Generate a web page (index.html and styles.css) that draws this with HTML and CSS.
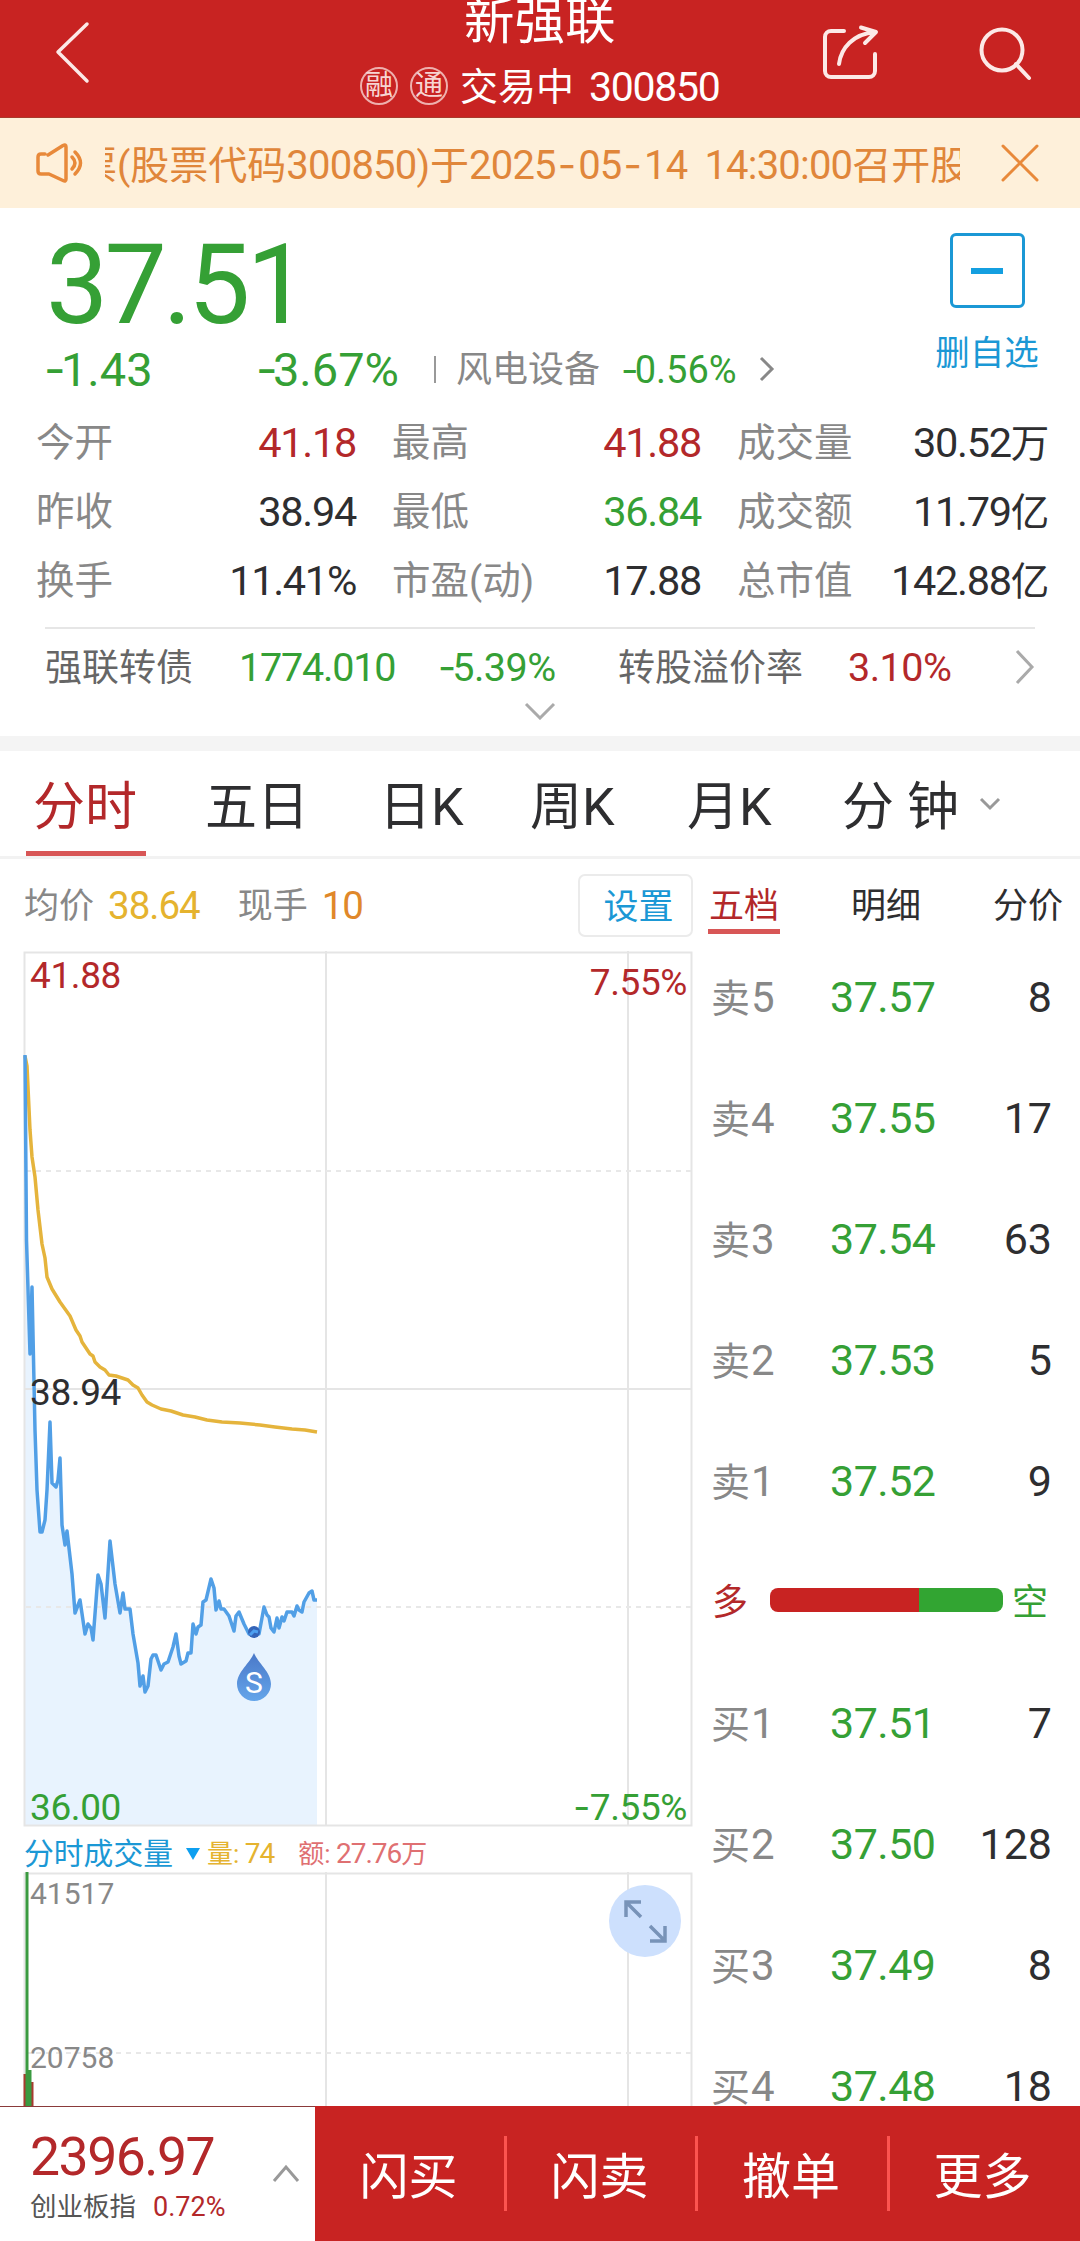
FILE: index.html
```html
<!DOCTYPE html>
<html lang="zh-CN">
<head>
<meta charset="utf-8">
<title>新强联 300850</title>
<link rel="stylesheet" href="styles.css">
</head>
<body>
<div class="app">
  <header class="topbar">
    <svg class="back" width="36" height="64" viewBox="0 0 36 64"><path d="M33 4 4 32 33 61"/></svg>
    <div class="heading">
      <h1>新强联</h1>
      <div class="status"><i class="badge">融</i><i class="badge">通</i><span>交易中</span><span class="code">300850</span></div>
    </div>
    <svg class="share" width="60" height="60" viewBox="0 0 60 60"><path d="M23 8H10a6 6 0 0 0-6 6V48a6 6 0 0 0 6 6H48a6 6 0 0 0 6-6V31"/><path d="M18 41C20 25 32 11 54 9M40 4.500 55 9 44 20"/></svg>
    <svg class="search" width="60" height="60" viewBox="0 0 60 60"><circle cx="27" cy="27" r="20.500"/><path d="M41 41 54 55"/></svg>
  </header>

  <div class="notice">
    <svg class="speaker" width="50" height="44" viewBox="0 0 50 44"><path d="M13 14 28 4.500Q31 3 31 6V38Q31 41 28 39.500L14 33H6Q3 33 3 30V16Q3 13 6 13H10"/><path d="M37 16Q43 22 37 28M40 11Q51 22 40 33"/></svg>
    <div class="ticker"><p>票(股票代码<b>300850</b>)于<b class="time">2025<u>-</u>05<u>-</u>14 14:30:00</b>召开股东大会</p></div>
    <svg class="close" width="38" height="38" viewBox="0 0 38 38"><path d="M2 2 36 36M36 2 2 36"/></svg>
  </div>

  <section class="quote">
    <div class="summary">
      <div class="figures">
        <div class="price">37.51</div>
        <div class="changes">
          <span class="delta"><u>-</u>1.43</span><span class="pct"><u>-</u>3.67%</span><i class="bar"></i><span class="sector">风电设备</span><span class="sector-pct"><u>-</u>0.56%</span>
          <svg width="18" height="26" viewBox="0 0 18 26"><path d="M3 2 14 13 3 24"/></svg>
        </div>
      </div>
      <div class="watch"><i class="minus"></i><span>删自选</span></div>
    </div>
    <div class="stats">
      <span>今开</span><b class="red">41.18</b><span>最高</span><b class="red">41.88</b><span>成交量</span><b>30.52<em>万</em></b>
      <span>昨收</span><b>38.94</b><span>最低</span><b class="green">36.84</b><span>成交额</span><b>11.79<em>亿</em></b>
      <span>换手</span><b>11.41%</b><span>市盈(动)</span><b>17.88</b><span>总市值</span><b>142.88<em>亿</em></b>
    </div>
    <div class="bond">
      <span class="bond-name">强联转债</span><b class="green bond-price">1774.010</b><b class="green bond-pct"><u>-</u>5.39%</b><span class="premium">转股溢价率</span><b class="red">3.10%</b>
      <svg width="20" height="36" viewBox="0 0 20 36"><path d="M2 2 17 18 2 34"/></svg>
    </div>
    <svg class="expand" width="32" height="18" viewBox="0 0 32 18"><path d="M2 2 16 16 30 2"/></svg>
  </section>

  <nav class="tabs">
    <span class="on">分时</span><span>五日</span><span>日K</span><span>周K</span><span>月K</span><span>分 钟</span>
    <svg width="22" height="14" viewBox="0 0 22 14"><path d="M2 2 11 11 20 2"/></svg>
  </nav>

  <main class="market">
    <div class="charts">
      <div class="legend"><span>均价</span><b class="yellow">38.64</b><span class="now">现手</span><b class="orange">10</b><button>设置</button></div>
      <div class="price-chart">
        <svg width="700" height="877" viewBox="0 950 700 877">
          <path class="area" d="M25 1055L26.500 1240 30 1354 32 1287 35 1430 37 1490 40 1532H42L45 1520 47 1490 50 1422 52 1483 56 1487 58 1480 60 1458 62 1525 65 1545 67 1531 72 1574 75 1613 80 1600 85 1634 88 1624 91 1628 93 1640 98 1575 101 1584 105 1618 110 1541 115 1584 120 1613 123 1593 125 1609H130L133 1634 138 1663 140 1686 143 1676 145 1692 148 1686 151 1659 153 1655H156L161 1670 164 1664 168 1662 173 1647 176 1634 179 1656 181 1664 186 1661 188 1653H191L193 1624 196 1634 198 1627 201 1625 203 1602 206 1600 211 1579 214 1588 216 1610 219 1601 221 1609H224L229 1616 234 1631 236 1616 239 1612 244 1624 249 1634H259L264 1607 267 1615 269 1617 271 1628 274 1632 277 1618 279 1628 282 1617 284 1621 287 1612H292L294 1616 297 1606 299 1610 302 1612 304 1602 309 1593 312 1591 314 1600H317V1825H25Z"/>
          <path class="grid" d="M24.500 952.500H691.500V1825.500H24.500ZM24 1389H691M326 951V1826M628 951V1826"/>
          <path class="dash" d="M26 1171H691M26 1607H691"/>
          <path class="average" d="M25 1056 27 1066 30 1130 32 1157 35 1177 38 1210 42 1244 45 1258 47 1277 52 1289 60 1302 70 1316 76 1330 80 1336 82 1342 90 1354 93 1356 95 1362 100 1367 105 1370 109 1375 116 1376 128 1380 133 1385 138 1388 142 1395 147 1402 152 1405 161 1409 171 1411 183 1415 195 1417 207 1420 222 1422 240 1423 260 1425 275 1427 292 1429 305 1430 317 1432"/>
          <path class="line" d="M25 1055L26.500 1240 30 1354 32 1287 35 1430 37 1490 40 1532H42L45 1520 47 1490 50 1422 52 1483 56 1487 58 1480 60 1458 62 1525 65 1545 67 1531 72 1574 75 1613 80 1600 85 1634 88 1624 91 1628 93 1640 98 1575 101 1584 105 1618 110 1541 115 1584 120 1613 123 1593 125 1609H130L133 1634 138 1663 140 1686 143 1676 145 1692 148 1686 151 1659 153 1655H156L161 1670 164 1664 168 1662 173 1647 176 1634 179 1656 181 1664 186 1661 188 1653H191L193 1624 196 1634 198 1627 201 1625 203 1602 206 1600 211 1579 214 1588 216 1610 219 1601 221 1609H224L229 1616 234 1631 236 1616 239 1612 244 1624 249 1634H259L264 1607 267 1615 269 1617 271 1628 274 1632 277 1618 279 1628 282 1617 284 1621 287 1612H292L294 1616 297 1606 299 1610 302 1612 304 1602 309 1593 312 1591 314 1600H317"/>
          <circle class="dot" cx="254" cy="1632" r="6"/>
          <path class="dot-line" d="M250 1635 254 1631 258 1632"/>
          <defs><linearGradient id="drop" x1="0" y1="0" x2="0" y2="1"><stop offset="0" stop-color="#4a78c8"/><stop offset="1" stop-color="#64a5ea"/></linearGradient></defs>
          <path fill="url(#drop)" d="M254 1653C258 1663 271 1672 271 1684A17 17 0 0 1 237 1684C237 1672 250 1663 254 1653Z"/>
          <text class="sell" x="254" y="1693" text-anchor="middle">S</text>
          <text class="axis red" x="30" y="988">41.88</text>
          <text class="axis dark" x="30" y="1405">38.94</text>
          <text class="axis green" x="30" y="1820">36.00</text>
          <text class="axis red" x="687" y="995" text-anchor="end">7.55%</text>
          <text class="axis green" x="687" y="1820" text-anchor="end"><tspan class="minus-sign">-</tspan>7.55%</text>
        </svg>
      </div>
      <div class="volume-legend"><span class="kind">分时成交量</span><svg width="14" height="12" viewBox="0 0 14 12"><path d="M0 0H14L7 12Z"/></svg><span class="yellow">量: <b>74</b></span><span class="amount">额: <b>27.76</b>万</span></div>
      <svg class="volume-chart" width="700" height="235" viewBox="0 1871 700 235">
        <path class="grid" d="M24.500 2110V1873.500H691.500V2110M326 1872V2110M628 1872V2110"/>
        <path class="dash" d="M26 2053H691"/>
        <path class="vol-red" d="M25 2074V2110M32 2082V2110"/>
        <path class="vol-green" d="M27 1872V2110M30 2070V2110"/>
        <text class="volume-axis" x="30" y="1904">41517</text>
        <text class="volume-axis" x="30" y="2068">20758</text>
        <circle class="zoom-bg" cx="645" cy="1921" r="36"/>
        <path class="zoom-arrows" d="M641 1902H626V1917M626 1902 641 1917M650 1941H665V1926M665 1941 650 1926"/>
      </svg>
    </div>

    <aside class="book">
      <div class="book-tabs"><span class="on">五档</span><span>明细</span><span>分价</span></div>
      <div class="level"><span>卖<b>5</b></span><b class="green">37.57</b><b>8</b></div>
      <div class="level"><span>卖<b>4</b></span><b class="green">37.55</b><b>17</b></div>
      <div class="level"><span>卖<b>3</b></span><b class="green">37.54</b><b>63</b></div>
      <div class="level"><span>卖<b>2</b></span><b class="green">37.53</b><b>5</b></div>
      <div class="level"><span>卖<b>1</b></span><b class="green">37.52</b><b>9</b></div>
      <div class="balance"><span class="red">多</span><i></i><span class="green">空</span></div>
      <div class="level"><span>买<b>1</b></span><b class="green">37.51</b><b>7</b></div>
      <div class="level"><span>买<b>2</b></span><b class="green">37.50</b><b>128</b></div>
      <div class="level"><span>买<b>3</b></span><b class="green">37.49</b><b>8</b></div>
      <div class="level"><span>买<b>4</b></span><b class="green">37.48</b><b>18</b></div>
    </aside>
  </main>

  <footer class="bottom">
    <div class="index">
      <div><div class="index-value">2396.97</div><div class="index-name">创业板指<b>0.72%</b></div></div>
      <svg width="28" height="20" viewBox="0 0 28 20"><path d="M2 17 14 3 26 17"/></svg>
    </div>
    <span>闪买</span><span>闪卖</span><span>撤单</span><span>更多</span>
  </footer>
</div>
</body>
</html>
```
FILE: styles.css
```css
* { box-sizing: border-box; }
body { margin: 0; background: #fff; }
.app {
  width: 1080px; height: 2241px; overflow: hidden;
  display: flex; flex-direction: column;
  font-family: Roboto, "Noto Sans CJK SC", sans-serif;
  color: #2e2e30; line-height: 1; white-space: nowrap;
}
b { font-weight: 400; }
i, em { font-style: normal; }
/* wider minus sign for signed figures */
u { text-decoration: none; font-family: Inter, sans-serif; letter-spacing: -.1em; }
.minus-sign { font-family: Inter, sans-serif; }
svg { display: block; fill: none; flex: none; }
.red { color: #b3282a; fill: #b3282a; }
.green { color: #35a035; fill: #35a035; }
.yellow { color: #e5b32f; }
.orange { color: #e0882a; }
.dark { fill: #2e2e30; }

.topbar {
  height: 118px; flex: none; background: #c82322; color: #fff;
  display: grid; grid-template-columns: 54px 306px 400px 60px 96px 60px; align-items: start;
  border-bottom: 1px solid #a93a2c;
}
.topbar svg { stroke: #fce9e7; stroke-width: 4; stroke-linecap: round; stroke-linejoin: round; }
.topbar .back { grid-column: 2; margin-top: 20px; stroke-width: 3.500; }
.heading { grid-column: 3; }
.heading h1 { margin: -4px 0 0 104px; font-size: 50.500px; line-height: 52px; font-weight: 400; }
.status { display: flex; align-items: center; margin-top: 18px; height: 40px; font-size: 38px; }
.status > span:nth-child(3) { padding-top: 2px; }
.badge {
  width: 38px; height: 38px; margin-right: 12px; border: 2px solid #eeb0ae; border-radius: 50%;
  font-size: 28px; line-height: 34px; text-align: center; color: #f7d5d3;
}
.status .code { font-size: 41px; letter-spacing: -1.300px; margin-left: 15px; padding-top: 2px; }
.share { margin: 23px 0 0 61px; }
.search { grid-column: 6; margin: 23px 0 0 59px; }

.notice {
  height: 90px; flex: none; background: #fef0da; color: #e0863a;
  display: flex; align-items: center; padding-left: 35px;
}
.notice svg { stroke: #e8893a; stroke-width: 3.500; stroke-linejoin: round; stroke-linecap: round; }
.ticker { width: 855px; margin-left: 20px; overflow: hidden; }
.ticker p { margin: 0 0 0 -27px; font-size: 39px; line-height: 56px; padding-top: 4px; }
.ticker b { font-size: 40px; letter-spacing: -.8px; }
.ticker u { letter-spacing: 2px; margin-left: 2px; }
.ticker .time { word-spacing: 8px; }
.notice .close { margin-left: 41px; stroke-width: 3; }

.quote { height: 528px; flex: none; display: flex; flex-direction: column; }
.summary { height: 200px; display: flex; justify-content: space-between; }
.price { margin: 27px 0 4px 46px; font-size: 111px; line-height: 100px; letter-spacing: -4px; color: #35a035; }
.changes { display: flex; align-items: center; height: 60px; color: #35a035; padding-left: 44px; }
.delta { font-size: 47px; width: 212px; }
.pct { font-size: 47px; width: 178px; }
.changes .bar { width: 2px; height: 27px; background: #999; margin-right: 20px; }
.sector { font-size: 36px; color: #888; width: 165px; padding-top: 2px; }
.sector-pct { font-size: 38px; width: 137px; }
.changes svg { stroke: #888; stroke-width: 3; }
.watch { display: flex; flex-direction: column; align-items: center; width: 186px; padding-top: 25px; color: #1b98d5; font-size: 34.500px; gap: 28px; }
.minus { width: 75px; height: 75px; border: 3px solid #1b98d5; border-radius: 6px; display: grid; place-items: center; }
.minus::after { content: ""; width: 32px; height: 6px; background: #149fe0; }

.stats {
  display: grid; grid-template-columns: 110px 210px 146px 199px 145px 202px;
  grid-auto-rows: 69px; align-items: center; padding-left: 36px;
  font-size: 38.500px; color: #888;
}
.stats > span { padding-top: 2px; }
.stats > b { font-size: 41.500px; letter-spacing: -1.300px; text-align: right; color: #2e2e30; }
.stats > span:nth-child(6n+3), .stats > span:nth-child(6n+5) { padding-left: 36px; }
.stats em { font-size: 38.500px; }
.stats .red { color: #b3282a; }
.stats .green { color: #35a035; }

.bond {
  margin: 12px 45px 0; height: 77px; border-top: 2px solid #e6e6e6;
  display: flex; align-items: center; font-size: 37px; color: #666;
}
.bond > span { padding-top: 3px; }
.bond b { font-size: 39.500px; letter-spacing: -1.200px; }
.bond-name { width: 194px; }
.bond-price { width: 199px; padding-top: 2px; }
.bond .bond-pct { width: 180px; letter-spacing: -.5px; padding-top: 2px; }
.bond .red { letter-spacing: -.5px; padding-top: 2px; }
.premium { width: 230px; }
.bond svg { margin-left: auto; stroke: #aaa; stroke-width: 3; }
.expand { margin: -2px auto 0; stroke: #aaa; stroke-width: 3; }

.tabs {
  height: 123px; flex: none; border-top: 15px solid #f4f4f4; border-bottom: 3px solid #f2f2f2;
  display: grid; grid-template-columns: 179px 174px 151px 157px 155px 135px 30px;
  font-size: 52px; line-height: 113px; padding-left: 26px;
}
.tabs span { height: 105px; }
.tabs .on { color: #b3282a; width: 120px; padding-left: 7px; border-bottom: 5px solid #d85656; }
.tabs svg { stroke: #999; stroke-width: 3; margin: 46px 0 0 2px; }

.market { height: 1247px; flex: none; display: flex; overflow: hidden; }
.charts { width: 700px; }
.legend { height: 91px; display: flex; align-items: center; font-size: 35px; color: #888; padding: 2px 0 0 24px; }
.legend > span { padding-top: 2px; }
.legend b { font-size: 38.500px; letter-spacing: -1px; margin-left: 14px; padding-top: 2px; }
.legend .now { margin-left: 38px; }
.legend button {
  margin: 0 7px 0 auto; width: 115px; height: 63px; padding: 3px 0 0 6px; background: #fff;
  border: 2px solid #ebebeb; border-radius: 7px; font: inherit; color: #1b98d5;
}
.grid { stroke: #e5e5e5; stroke-width: 2; }
.dash { stroke: #e8e8e8; stroke-width: 2; stroke-dasharray: 5 5; }
.area { fill: #e8f3fe; }
.average { stroke: #e5b43c; stroke-width: 3.500; stroke-linejoin: round; }
.line { stroke: #519fe6; stroke-width: 3.500; stroke-linejoin: round; }
.dot { fill: #3464b8; }
.dot-line { stroke: #4d9ff0; stroke-width: 3; }
.sell { font-size: 30px; fill: #fff; }
.axis { font-size: 37px; letter-spacing: -.4px; }
.volume-legend { height: 44px; display: flex; align-items: center; padding: 9px 0 0 24px; font-size: 26px; }
.volume-legend .kind { color: #1b98d5; font-size: 29.800px; width: 162px; }
.volume-legend svg { fill: #0d9ff0; margin-right: 7px; }
.volume-legend b { font-size: 28px; letter-spacing: -1px; margin-left: -1px; }
.amount { color: #df7072; margin-left: 24px; }
.volume-axis { font-size: 30px; fill: #888; }
.vol-red { stroke: #a83a30; stroke-width: 3; }
.vol-green { stroke: #3a9a40; stroke-width: 3; }
.zoom-bg { fill: #cde0fd; }
.zoom-arrows { stroke: #7893b8; stroke-width: 3.500; }

.book { width: 380px; padding-left: 8px; }
.book-tabs { height: 78px; display: flex; font-size: 35px; line-height: 95px; }
.book-tabs span { width: 72px; height: 75px; margin-right: 70px; flex: none; text-align: center; }
.book-tabs .on { color: #b3282a; border-bottom: 5px solid #d85656; }
.level { height: 121px; display: grid; grid-template-columns: 119px 120px 102px; padding-left: 3px; align-items: center; font-size: 39px; color: #888; }
.level b { font-size: 43px; letter-spacing: -.5px; }
.level > b:last-child { text-align: right; color: #2e2e30; letter-spacing: 0; }
.level span b { font-size: 42px; margin-left: 1px; }
.balance { height: 121px; display: flex; align-items: center; padding-left: 4px; font-size: 36px; }
.balance i { width: 233px; height: 24px; margin: -6px 9px 0 22px; border-radius: 8px; background: linear-gradient(90deg, #c82322 64%, #32a532 64%); }

.bottom { height: 135px; flex: none; display: grid; grid-template-columns: 315px 191px 191px 192px 191px; background: #c82322; color: #fff; }
.bottom > span { font-size: 49px; display: flex; align-items: center; justify-content: center; position: relative; padding: 7px 4px 0 0; }
.bottom > span + span::before { content: ""; width: 3px; height: 75px; background: #fc5450; position: absolute; left: -2px; top: 30px; }
.index { background: #fff; border-top: 1px solid #8a3a3a; display: flex; align-items: center; padding: 6px 0 0 30px; }
.index-value { font-size: 53.500px; letter-spacing: -1.500px; color: #b3282a; line-height: 60px; }
.index-name { font-size: 26.500px; color: #555; line-height: 40px; }
.index-name b { font-size: 27px; color: #b3282a; margin-left: 17px; }
.index svg { margin: -6px 15px 0 auto; stroke: #999; stroke-width: 3; }
```
